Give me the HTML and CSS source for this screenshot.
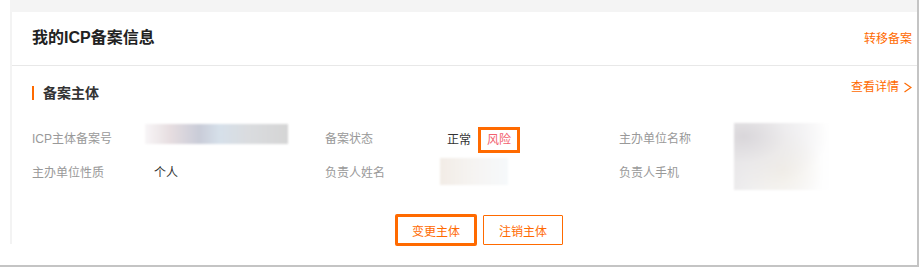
FILE: index.html
```html
<!DOCTYPE html>
<html lang="zh-CN">
<head>
<meta charset="utf-8">
<link rel="stylesheet" href="styles.css">
</head>
<body>
<div class="frame">
  <div class="topband"></div>
  <div class="body-row">
    <div class="strip"></div>
    <div class="card">
      <div class="card-head">
        <h1 class="title">我的ICP备案信息</h1>
        <a class="link">转移备案</a>
      </div>
      <div class="sec-head">
        <h2 class="sec-title">备案主体</h2>
        <a class="link detail">查看详情<svg class="chev" width="9" height="11" viewBox="0 0 9 11"><path d="M1.5 1 L8 5.5 L1.5 10" fill="none" stroke="#ff6a00" stroke-width="1.2"/></svg></a>
      </div>
      <div class="grid">
        <div class="label">ICP主体备案号</div>
        <div class="val"><div class="blur blur1"></div></div>
        <div class="label">备案状态</div>
        <div class="val status"><span>正常</span><span class="risk">风险</span></div>
        <div class="label">主办单位名称</div>
        <div class="val span2"><div class="blur blur3"></div></div>
        <div class="label">主办单位性质</div>
        <div class="val">个人</div>
        <div class="label">负责人姓名</div>
        <div class="val"><div class="blur blur2"></div></div>
        <div class="label">负责人手机</div>
      </div>
      <div class="actions">
        <button class="btn btn-marked">变更主体</button>
        <button class="btn">注销主体</button>
      </div>
    </div>
  </div>
</div>
</body>
</html>
```

FILE: styles.css
```css
html, body {
  margin: 0;
  padding: 0;
  background: #fff;
}
body {
  font-family: "Liberation Sans", "Noto Sans CJK SC", sans-serif;
  color: #333;
  width: 919px;
  height: 267px;
  overflow: hidden;
}
.frame {
  width: 917px;
  height: 265px;
  border-right: 2px solid #c4c4c4;
  border-bottom: 2px solid #c4c4c4;
  display: flex;
  flex-direction: column;
}
.topband {
  height: 12px;
  margin-left: 10px;
  background: #f4f4f4;
  flex: none;
}
.body-row {
  flex: 1;
  display: flex;
  margin-left: 10px;
}
.strip {
  width: 2px;
  height: 232px;
  background: #f3f3f3;
  flex: none;
}
.card {
  flex: 1;
  background: #fff;
  display: flex;
  flex-direction: column;
}
.card-head {
  height: 53px;
  border-bottom: 1px solid #e8e8e8;
  display: flex;
  align-items: center;
  justify-content: space-between;
  padding: 0 5px 0 20px;
  flex: none;
}
.title {
  margin: 0;
  font-size: 16px;
  font-weight: bold;
  line-height: 20px;
  color: #222;
  position: relative;
  top: -1px;
}
.link {
  font-size: 12px;
  line-height: 14px;
  color: #ff6a00;
}
.sec-head {
  height: 56px;
  display: flex;
  justify-content: space-between;
  align-items: flex-start;
  padding: 0 5px 0 20px;
  flex: none;
}
.sec-title {
  margin: 20px 0 0;
  height: 14px;
  border-left: 2px solid #ff6a00;
  padding-left: 9px;
  font-size: 14px;
  line-height: 14px;
  font-weight: bold;
  color: #333;
}
.detail {
  margin-top: 14px;
  display: flex;
  align-items: center;
  gap: 4px;
}
.chev {
  display: block;
}
.grid {
  display: grid;
  grid-template-columns: 122px 171px 122px 172px 122px 1fr;
  grid-template-rows: 34px 34px;
  align-items: center;
  padding-left: 20px;
  font-size: 12px;
  line-height: 14px;
  flex: none;
}
.label {
  color: #999;
}
.val {
  color: #333;
}
.span2 {
  grid-row: span 2;
  align-self: start;
}
.status {
  display: flex;
  align-items: center;
  padding-top: 2px;
}
.risk {
  margin-left: 7px;
  border: 3px solid #ff6a00;
  padding: 3px 6px;
  color: #f2606e;
  line-height: 14px;
}
.blur {
  filter: blur(1px);
}
.blur1 {
  width: 143px;
  height: 20px;
  margin-left: -9px;
  margin-top: -10px;
  background: linear-gradient(90deg, #f8f6f7 0%, #e6dde0 18%, #c9ccd8 38%, #d6e0ea 52%, #dadcdf 72%, #d5d5d5 100%);
}
.blur2 {
  width: 68px;
  height: 27px;
  margin-left: -7px;
  margin-top: -4px;
  background: linear-gradient(90deg, #f2ece6 0%, #f6f4f2 50%, #f6f9fb 100%);
}
.blur3 {
  width: 96px;
  height: 67px;
  margin-left: -7px;
  margin-top: 1px;
  background:
    radial-gradient(ellipse at 10% 20%, rgba(215,212,216,0.9) 0%, rgba(230,228,230,0.55) 35%, rgba(255,255,255,0) 70%),
    radial-gradient(ellipse at 50% 70%, rgba(242,238,230,0.9) 0%, rgba(255,255,255,0) 60%),
    linear-gradient(90deg, #ecebec 0%, #f8f8f9 60%, #ffffff 100%);
}
.actions {
  display: flex;
  align-items: center;
  gap: 6px;
  height: 32px;
  margin-top: 24px;
  padding-left: 383px;
  flex: none;
}
.btn {
  width: 80px;
  height: 30px;
  border: 1px solid #ff6a00;
  background: #fff;
  color: #ff6a00;
  font-family: "Liberation Sans", "Noto Sans CJK SC", sans-serif;
  font-size: 12px;
  padding: 0;
  border-radius: 1px;
}
.btn-marked {
  width: 82px;
  height: 32px;
  border: 3px solid #ff6a00;
  border-radius: 2px;
}
```
